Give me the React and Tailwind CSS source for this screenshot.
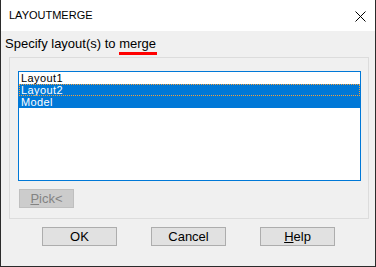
import React from 'react';

const items = [
  { name: 'Layout1', selected: false, focus: false },
  { name: 'Layout2', selected: true, focus: true },
  { name: 'Model', selected: true, focus: false },
];

const DialogButton = ({ children }) => (
  <button className="w-[75px] h-[19px] bg-[#e1e1e1] border border-[#adadad] text-[13px] leading-[17px] text-black">
    {children}
  </button>
);

const App = () => {
  return (
    <div className="w-[376px] h-[267px] flex flex-col border-x border-b border-[#2b2b2b] bg-[#f0f0f0] font-['Liberation_Sans',sans-serif] overflow-hidden">
      {/* Title bar */}
      <div className="h-[31px] bg-white flex items-center justify-between pl-[8px] pr-[9px] shrink-0">
        <span className="text-[11px] text-[#000]">LAYOUTMERGE</span>
        <svg width="11" height="11" viewBox="0 0 11 11" className="mt-[1px]">
          <path d="M0.5 0.5 L10.5 10.5 M10.5 0.5 L0.5 10.5" stroke="#000" strokeWidth="1" />
        </svg>
      </div>

      {/* Body */}
      <div className="flex flex-col">
        <div className="h-[26px] pl-[4px] pt-[5px] text-[13px] leading-[15px] text-black">
          Specify layout(s) to{' '}
          <span className="relative">
            merge
            <span className="absolute left-0 right-[-1px] top-[16px] h-[3px] bg-[#ff0000]" />
          </span>
        </div>

        {/* Group box */}
        <div className="ml-[8px] w-[360px] h-[162px] border border-[#dcdcdc] pt-[13px] pl-[8px] pr-[7px]">
          <div className="h-[110px] w-[343px] border border-[#0078d7] bg-white text-[11px] leading-[12px] tracking-[0.4px]">
            {items.map((it) => (
              <div
                key={it.name}
                className={`h-[12px] pl-[2px] ${
                  it.selected ? 'bg-[#0078d7] text-white' : 'text-black'
                } ${it.focus ? 'outline-1 outline-dotted outline-[#f0a040] -outline-offset-1' : ''}`}
              >
                {it.name}
              </div>
            ))}
          </div>
          <button className="mt-[8px] ml-[1px] w-[55px] h-[19px] bg-[#cccccc] border border-[#bfbfbf] text-[13px] leading-[17px] text-[#838383]">
            <span className="underline">P</span>ick&lt;
          </button>
        </div>

        {/* Buttons */}
        <div className="flex mt-[8px] ml-[41px] gap-[34px]">
          <DialogButton>OK</DialogButton>
          <DialogButton>Cancel</DialogButton>
          <DialogButton>
            <span className="underline">H</span>elp
          </DialogButton>
        </div>
      </div>
    </div>
  );
};

export default App;
